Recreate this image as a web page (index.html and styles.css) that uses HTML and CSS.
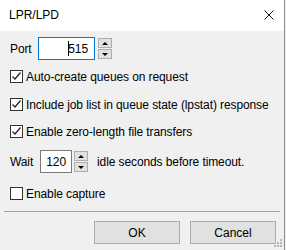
FILE: index.html
```html
<!DOCTYPE html>
<html lang="en">
<head>
    <meta charset="UTF-8">
    <title>LPR/LPD</title>
    <link rel="stylesheet" href="styles.css">
</head>
<body>

<div class="window">
    <div class="titlebar">
        <span class="title">LPR/LPD</span>
        <svg class="close" width="10" height="10" viewBox="0 0 10 10">
            <path d="M0.5 0.5 L9.5 9.5 M9.5 0.5 L0.5 9.5" stroke="#111" stroke-width="1"/>
        </svg>
    </div>

    <div class="content">
        <div class="row port-row">
            <span class="label">Port</span>
            <div class="field field-port focused"><span class="caret"></span>515</div>
            <div class="spin">
                <div class="spin-btn"><span class="tri-up"></span></div>
                <div class="spin-btn"><span class="tri-down"></span></div>
            </div>
        </div>

        <label class="check cb1">
            <span class="box checked"><svg width="11" height="11" viewBox="0 0 11 11"><path d="M1.5 5.5 L4 8 L9.5 1.5" fill="none" stroke="#222" stroke-width="1.2"/></svg></span>
            Auto-create queues on request
        </label>
        <label class="check cb2">
            <span class="box checked"><svg width="11" height="11" viewBox="0 0 11 11"><path d="M1.5 5.5 L4 8 L9.5 1.5" fill="none" stroke="#222" stroke-width="1.2"/></svg></span>
            Include job list in queue state (lpstat) response
        </label>
        <label class="check cb3">
            <span class="box checked"><svg width="11" height="11" viewBox="0 0 11 11"><path d="M1.5 5.5 L4 8 L9.5 1.5" fill="none" stroke="#222" stroke-width="1.2"/></svg></span>
            Enable zero-length file transfers
        </label>

        <div class="row wait-row">
            <span class="label">Wait</span>
            <div class="field field-wait">120</div>
            <div class="spin">
                <div class="spin-btn"><span class="tri-up"></span></div>
                <div class="spin-btn"><span class="tri-down"></span></div>
            </div>
            <span class="after">idle seconds before timeout.</span>
        </div>

        <label class="check cb4">
            <span class="box"></span>
            Enable capture
        </label>

        <div class="separator"></div>

        <div class="buttons">
            <button class="btn">OK</button>
            <button class="btn">Cancel</button>
        </div>

        <svg class="grip" width="8" height="8" viewBox="0 0 8 8">
            <rect x="6" y="0" width="2" height="2" fill="#b8b8b8"/>
            <rect x="3" y="3" width="2" height="2" fill="#b8b8b8"/>
            <rect x="6" y="3" width="2" height="2" fill="#b8b8b8"/>
            <rect x="0" y="6" width="2" height="2" fill="#b8b8b8"/>
            <rect x="3" y="6" width="2" height="2" fill="#b8b8b8"/>
            <rect x="6" y="6" width="2" height="2" fill="#b8b8b8"/>
        </svg>
    </div>
</div>

</body>
</html>
```

FILE: styles.css
```css
body {
    margin: 0;
    font-family: "Liberation Sans", Arial, sans-serif;
    font-size: 12px;
    color: #000;
    background-color: #f0f0f0;
}
.window {
    width: 285px;
    height: 250px;
    border-right: 1px solid #8c8c8c;
    box-sizing: border-box;
    display: flex;
    flex-direction: column;
}
.titlebar {
    height: 31px;
    background-color: #fff;
    display: flex;
    align-items: center;
    justify-content: space-between;
    padding: 0 10px 0 9px;
    flex-shrink: 0;
}
.title {
    font-size: 12px;
    margin-top: -1px;
}
.close {
    display: block;
    margin-top: -1px;
}
.content {
    flex: 1;
    position: relative;
    display: flex;
    flex-direction: column;
    padding: 6px 0 0 10px;
    white-space: nowrap;
    letter-spacing: -0.1px;
}
.row {
    display: flex;
    align-items: center;
    height: 23px;
}
.label {
    width: 28px;
}
.wait-row .label {
    width: 30px;
}
.field {
    height: 23px;
    box-sizing: border-box;
    background-color: #fff;
    border: 1px solid #7a7a7a;
    display: flex;
    align-items: center;
    justify-content: flex-end;
}
.field-port {
    width: 57px;
    padding-right: 6px;
    border-color: #0078d7;
}
.field-wait {
    width: 32px;
    padding-right: 5px;
}
.caret {
    width: 1px;
    height: 15px;
    background-color: #000;
    margin-right: -1px;
}
.spin {
    display: flex;
    flex-direction: column;
    gap: 1px;
    margin-left: 3px;
}
.wait-row .spin {
    margin-left: 2px;
}
.spin-btn {
    width: 14px;
    height: 10px;
    box-sizing: border-box;
    background-color: #e1e1e1;
    border: 1px solid #adadad;
    display: flex;
    align-items: center;
    justify-content: center;
}
.tri-up {
    width: 0;
    height: 0;
    border-left: 3px solid transparent;
    border-right: 3px solid transparent;
    border-bottom: 3px solid #000;
}
.tri-down {
    width: 0;
    height: 0;
    border-left: 3px solid transparent;
    border-right: 3px solid transparent;
    border-top: 3px solid #000;
}
.after {
    margin-left: 9px;
}
.check {
    display: flex;
    align-items: center;
    height: 13px;
}
.box {
    width: 13px;
    height: 13px;
    box-sizing: border-box;
    border: 1px solid #333;
    background-color: #fff;
    margin-right: 3px;
    display: flex;
    flex-shrink: 0;
}
.box svg {
    display: block;
}
.cb1 {
    margin-top: 10px;
}
.cb2 {
    margin-top: 15px;
}
.cb3 {
    margin-top: 14px;
}
.wait-row {
    margin-top: 12px;
}
.cb4 {
    margin-top: 14px;
}
.separator {
    height: 1px;
    margin: 11px 4px 0 -6px;
    background-color: #a0a0a0;
}
.buttons {
    display: flex;
    justify-content: flex-end;
    gap: 10px;
    margin-top: 9px;
    padding-right: 8px;
}
.btn {
    width: 86px;
    height: 23px;
    font-family: inherit;
    font-size: 12px;
    background-color: #e1e1e1;
    border: 1px solid #adadad;
    padding: 0;
    color: #000;
}
.grip {
    position: absolute;
    right: 2px;
    bottom: 3px;
}
```
